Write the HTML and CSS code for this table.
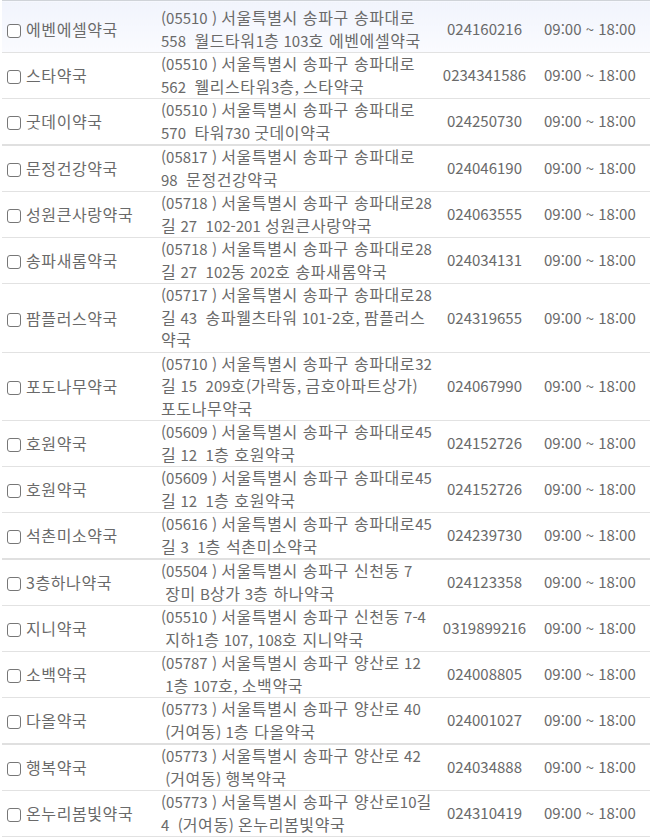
FILE: index.html
```html
<!DOCTYPE html>
<html lang="ko">
<head>
<meta charset="utf-8">
<link rel="stylesheet" href="styles.css">
</head>
<body>
<table class="list">
<colgroup><col class="c-name"><col class="c-addr"><col class="c-tel"><col class="c-time"></colgroup>
<tbody>
<tr class="hover first"><td class="name"><span class="cb"></span>에벤에셀약국</td><td class="addr"><span class="ln">(05510 ) <span class="k">서울특별시 송파구 송파대로</span></span><span class="ln">558  <span class="k">월드타워</span>1<span class="k">층</span> 103<span class="k">호 에벤에셀약국</span></span></td><td class="tel">024160216</td><td class="time">09:00 ~ 18:00</td></tr>
<tr><td class="name"><span class="cb"></span>스타약국</td><td class="addr"><span class="ln">(05510 ) <span class="k">서울특별시 송파구 송파대로</span></span><span class="ln">562  <span class="k">웰리스타워</span>3<span class="k">층</span>, <span class="k">스타약국</span></span></td><td class="tel">0234341586</td><td class="time">09:00 ~ 18:00</td></tr>
<tr class="thick"><td class="name"><span class="cb"></span>굿데이약국</td><td class="addr"><span class="ln">(05510 ) <span class="k">서울특별시 송파구 송파대로</span></span><span class="ln">570  <span class="k">타워</span>730 <span class="k">굿데이약국</span></span></td><td class="tel">024250730</td><td class="time">09:00 ~ 18:00</td></tr>
<tr><td class="name"><span class="cb"></span>문정건강약국</td><td class="addr"><span class="ln">(05817 ) <span class="k">서울특별시 송파구 송파대로</span></span><span class="ln">98  <span class="k">문정건강약국</span></span></td><td class="tel">024046190</td><td class="time">09:00 ~ 18:00</td></tr>
<tr><td class="name"><span class="cb"></span>성원큰사랑약국</td><td class="addr"><span class="ln">(05718 ) <span class="k">서울특별시 송파구 송파대로</span>28</span><span class="ln"><span class="k">길</span> 27  102-201 <span class="k">성원큰사랑약국</span></span></td><td class="tel">024063555</td><td class="time">09:00 ~ 18:00</td></tr>
<tr><td class="name"><span class="cb"></span>송파새롬약국</td><td class="addr"><span class="ln">(05718 ) <span class="k">서울특별시 송파구 송파대로</span>28</span><span class="ln"><span class="k">길</span> 27  102<span class="k">동</span> 202<span class="k">호 송파새롬약국</span></span></td><td class="tel">024034131</td><td class="time">09:00 ~ 18:00</td></tr>
<tr><td class="name"><span class="cb"></span>팜플러스약국</td><td class="addr"><span class="ln">(05717 ) <span class="k">서울특별시 송파구 송파대로</span>28</span><span class="ln"><span class="k">길</span> 43  <span class="k">송파웰츠타워</span> 101-2<span class="k">호</span>, <span class="k">팜플러스</span></span><span class="ln"><span class="k">약국</span></span></td><td class="tel">024319655</td><td class="time">09:00 ~ 18:00</td></tr>
<tr><td class="name"><span class="cb"></span>포도나무약국</td><td class="addr"><span class="ln">(05710 ) <span class="k">서울특별시 송파구 송파대로</span>32</span><span class="ln"><span class="k">길</span> 15  209<span class="k">호</span>(<span class="k">가락동</span>, <span class="k">금호아파트상가</span>)</span><span class="ln"><span class="k">포도나무약국</span></span></td><td class="tel">024067990</td><td class="time">09:00 ~ 18:00</td></tr>
<tr><td class="name"><span class="cb"></span>호원약국</td><td class="addr"><span class="ln">(05609 ) <span class="k">서울특별시 송파구 송파대로</span>45</span><span class="ln"><span class="k">길</span> 12  1<span class="k">층 호원약국</span></span></td><td class="tel">024152726</td><td class="time">09:00 ~ 18:00</td></tr>
<tr><td class="name"><span class="cb"></span>호원약국</td><td class="addr"><span class="ln">(05609 ) <span class="k">서울특별시 송파구 송파대로</span>45</span><span class="ln"><span class="k">길</span> 12  1<span class="k">층 호원약국</span></span></td><td class="tel">024152726</td><td class="time">09:00 ~ 18:00</td></tr>
<tr class="thick"><td class="name"><span class="cb"></span>석촌미소약국</td><td class="addr"><span class="ln">(05616 ) <span class="k">서울특별시 송파구 송파대로</span>45</span><span class="ln"><span class="k">길</span> 3  1<span class="k">층 석촌미소약국</span></span></td><td class="tel">024239730</td><td class="time">09:00 ~ 18:00</td></tr>
<tr><td class="name"><span class="cb"></span>3층하나약국</td><td class="addr"><span class="ln">(05504 ) <span class="k">서울특별시 송파구 신천동</span> 7</span><span class="ln"> <span class="k">장미</span> B<span class="k">상가</span> 3<span class="k">층 하나약국</span></span></td><td class="tel">024123358</td><td class="time">09:00 ~ 18:00</td></tr>
<tr><td class="name"><span class="cb"></span>지니약국</td><td class="addr"><span class="ln">(05510 ) <span class="k">서울특별시 송파구 신천동</span> 7-4</span><span class="ln"> <span class="k">지하</span>1<span class="k">층</span> 107, 108<span class="k">호 지니약국</span></span></td><td class="tel">0319899216</td><td class="time">09:00 ~ 18:00</td></tr>
<tr><td class="name"><span class="cb"></span>소백약국</td><td class="addr"><span class="ln">(05787 ) <span class="k">서울특별시 송파구 양산로</span> 12</span><span class="ln"> 1<span class="k">층</span> 107<span class="k">호</span>, <span class="k">소백약국</span></span></td><td class="tel">024008805</td><td class="time">09:00 ~ 18:00</td></tr>
<tr class="thick"><td class="name"><span class="cb"></span>다올약국</td><td class="addr"><span class="ln">(05773 ) <span class="k">서울특별시 송파구 양산로</span> 40</span><span class="ln"> (<span class="k">거여동</span>) 1<span class="k">층 다올약국</span></span></td><td class="tel">024001027</td><td class="time">09:00 ~ 18:00</td></tr>
<tr><td class="name"><span class="cb"></span>행복약국</td><td class="addr"><span class="ln">(05773 ) <span class="k">서울특별시 송파구 양산로</span> 42</span><span class="ln"> (<span class="k">거여동</span>) <span class="k">행복약국</span></span></td><td class="tel">024034888</td><td class="time">09:00 ~ 18:00</td></tr>
<tr><td class="name"><span class="cb"></span>온누리봄빛약국</td><td class="addr"><span class="ln">(05773 ) <span class="k">서울특별시 송파구 양산로</span>10<span class="k">길</span></span><span class="ln">4  (<span class="k">거여동</span>) <span class="k">온누리봄빛약국</span></span></td><td class="tel">024310419</td><td class="time">09:00 ~ 18:00</td></tr>
</tbody>
</table>
</body>
</html>
```
FILE: styles.css
```css
html, body {
  margin: 0;
  padding: 0;
  background: #ffffff;
}
body {
  padding-left: 2px;
  font-family: "Noto Sans CJK KR", "Noto Sans", sans-serif;
  font-size: 15px;
  color: #6a6a6a;
}
.list {
  border-collapse: collapse;
  width: 660px;
  table-layout: fixed;
  border-top: 1px solid #cfd3d8;
}
.c-name { width: 150px; }
.c-addr { width: 285px; }
.c-tel { width: 95px; }
.c-time { width: 130px; }
.list td {
  padding: 0;
  line-height: 22.5px;
  border-bottom: 1px solid #e2e2e2;
  vertical-align: middle;
  white-space: nowrap;
}
.list tr.first td {
  padding-top: 6px;
}
.list tr.thick td {
  border-bottom: 2px solid #e0e0e0;
}
.list tr.hover td {
  background: linear-gradient(#f1f4fc, #fafbff);
}
.list td.name {
  padding-left: 5px;
  font-size: 16px;
  letter-spacing: 0.6px;
}
.k {
  font-size: 16px;
  letter-spacing: 0.6px;
  line-height: 1;
}
.cb {
  display: inline-block;
  width: 12px;
  height: 12px;
  border: 1.5px solid #777777;
  border-radius: 3px;
  margin-right: 5px;
  vertical-align: -2px;
  background: #fff;
}
.list td.addr {
  padding-left: 9px;
}
.ln {
  display: block;
  height: 22.5px;
  white-space: pre;
}
.tel {
  text-align: center;
}
.list td.time {
  padding-left: 12px;
}
```
